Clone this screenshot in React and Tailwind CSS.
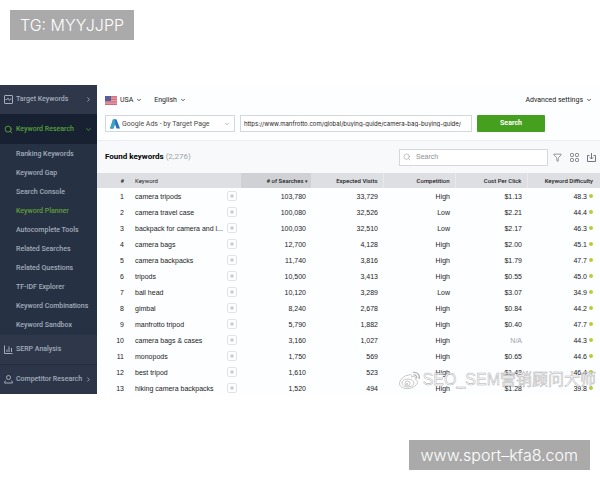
import React from 'react'
import { ChevronDown, ChevronRight, Search, Filter, Plus } from 'lucide-react'

const subItems = [
  'Ranking Keywords',
  'Keyword Gap',
  'Search Console',
  'Keyword Planner',
  'Autocomplete Tools',
  'Related Searches',
  'Related Questions',
  'TF-IDF Explorer',
  'Keyword Combinations',
  'Keyword Sandbox',
]

const rows = [
  ['camera tripods', '103,780', '33,729', 'High', '$1.13', '48.3'],
  ['camera travel case', '100,080', '32,526', 'Low', '$2.21', '44.4'],
  ['backpack for camera and l...', '100,030', '32,510', 'Low', '$2.17', '46.3'],
  ['camera bags', '12,700', '4,128', 'High', '$2.00', '45.1'],
  ['camera backpacks', '11,740', '3,816', 'High', '$1.79', '47.7'],
  ['tripods', '10,500', '3,413', 'High', '$0.55', '45.0'],
  ['ball head', '10,120', '3,289', 'Low', '$3.07', '34.9'],
  ['gimbal', '8,240', '2,678', 'High', '$0.84', '44.2'],
  ['manfrotto tripod', '5,790', '1,882', 'High', '$0.40', '47.7'],
  ['camera bags & cases', '3,160', '1,027', 'High', 'N/A', '44.3'],
  ['monopods', '1,750', '569', 'High', '$0.65', '44.6'],
  ['best tripod', '1,610', '523', 'High', '$1.42', '46.4'],
  ['hiking camera backpacks', '1,520', '494', 'High', '$1.28', '39.8'],
]

const TargetIcon = () => (
  <svg viewBox="0 0 18 18" className="w-[9px] h-[9px] shrink-0" fill="none" stroke="currentColor" strokeWidth="2">
    <rect x="1" y="1" width="16" height="16" rx="1" />
    <path d="M3 9h3l2-3 3 5 2-3h2" />
  </svg>
)

const BarsIcon = () => (
  <svg viewBox="0 0 18 18" className="w-[9px] h-[9px] shrink-0" fill="none" stroke="currentColor" strokeWidth="2">
    <path d="M1 1v16h16M6 14V9M10 14V3M15 14V6" />
  </svg>
)

const PersonIcon = () => (
  <svg viewBox="0 0 18 18" className="w-[9px] h-[9px] shrink-0" fill="none" stroke="currentColor" strokeWidth="2">
    <circle cx="9" cy="5" r="4" />
    <path d="M4 11c-2 1-3 3-3 5h16c0-2-1-4-3-5" />
  </svg>
)

const FlagIcon = () => (
  <svg viewBox="0 0 24 18" className="w-[12px] h-[9px] shrink-0">
    <rect width="24" height="18" fill="#e3a3ab" />
    <path d="M0 1.5h24M0 6.5h24M0 11.5h24M0 16.5h24" stroke="#d0687a" strokeWidth="2.5" />
    <rect width="12" height="10" fill="#565f9a" />
  </svg>
)

const AdsIcon = () => (
  <svg viewBox="0 0 20 20" className="w-[10px] h-[10px] shrink-0">
    <path d="M6 1h7l-6 18H0z" fill="#2f9e5b" />
    <path d="M7 1h6l7 18h-7z" fill="#2b6cc4" />
    <path d="M6 1h3l2 6-4 12H0z" fill="#37a4c8" />
  </svg>
)

const GridIcon = () => (
  <svg viewBox="0 0 18 18" className="w-[9px] h-[9px]" fill="none" stroke="currentColor" strokeWidth="1.8">
    <rect x="1" y="1" width="6" height="6" rx="2" />
    <rect x="11" y="1" width="6" height="6" rx="2" />
    <rect x="1" y="11" width="6" height="6" rx="2" />
    <rect x="11" y="11" width="6" height="6" rx="2" />
  </svg>
)

const ExportIcon = () => (
  <svg viewBox="0 0 18 18" className="w-[9px] h-[9px]" fill="none" stroke="currentColor" strokeWidth="1.8">
    <path d="M5 5H1v12h16V5h-4M9 0v12M5.500 8.500L9 12l3.500-3.500" />
  </svg>
)

const WeiboIcon = () => (
  <svg viewBox="0 0 44 38" className="w-[22px] h-[19px] shrink-0" fill="#ffffff" stroke="#b4b4b4" strokeWidth="1.5">
    <path d="M18 9c4-3 9-2 7 3 6-2 10 0 8 5 5 2 5 7 1 11-6 7-19 9-27 5-8-4-8-11 0-19 4-4 8-6 11-5z" />
    <ellipse cx="18" cy="24" rx="12" ry="8" />
    <circle cx="17" cy="25" r="5" />
    <circle cx="16" cy="26" r="1.500" />
    <path d="M28 3c8-2 15 5 12 13M29 8c4-1 8 3 6 7" fill="none" strokeWidth="2.500" />
  </svg>
)

const SideButton = ({ icon, label, className, arrow }) => (
  <button className={`flex items-center w-full pl-1 pr-[5px] gap-[3px] ${className}`}>
    {icon}
    <span className="flex-1 text-left whitespace-nowrap">{label}</span>
    {arrow}
  </button>
)

const Sidebar = () => (
  <nav className="w-[97px] shrink-0 bg-[#263144] text-[#a3adbb] font-['Roboto',sans-serif] font-medium text-[7px] leading-[9px]">
    <SideButton
      icon={<TargetIcon />}
      label="Target Keywords"
      className="h-[29px] bg-[#2f374a]"
      arrow={<ChevronRight size={7} strokeWidth={3} />}
    />
    <SideButton
      icon={<Search size={9} strokeWidth={2.5} className="shrink-0" />}
      label="Keyword Research"
      className="h-[30px] bg-[#172131] text-[#57a03c]"
      arrow={<ChevronDown size={7} strokeWidth={3} />}
    />
    <ul className="h-[191px] pt-px">
      {subItems.map((item) => (
        <li key={item} className="h-[19px] flex items-center pl-4">
          <a href="#" className={item === 'Keyword Planner' ? 'text-[#5f9f38]' : ''}>{item}</a>
        </li>
      ))}
    </ul>
    <SideButton
      icon={<BarsIcon />}
      label="SERP Analysis"
      className="h-[30px] bg-[#2f374a] border-b border-[#232c3d]"
    />
    <SideButton
      icon={<PersonIcon />}
      label="Competitor Research"
      className="h-[29px] bg-[#2d3648]"
      arrow={<ChevronRight size={7} strokeWidth={3} />}
    />
  </nav>
)

const Toolbar = () => (
  <div className="h-[56px] px-2 pt-[10px] border-b border-[#eceef0]">
    <div className="flex items-center h-[10px] font-['Roboto',sans-serif] text-[7px] leading-[10px]">
      <button className="flex items-center gap-[3px]">
        <FlagIcon />
        USA
        <ChevronDown size={6} strokeWidth={3} />
      </button>
      <button className="flex items-center gap-[3px] ml-3">
        English
        <ChevronDown size={6} strokeWidth={3} />
      </button>
      <button className="flex items-center gap-[3px] ml-auto">
        Advanced settings
        <ChevronDown size={6} strokeWidth={3} />
      </button>
    </div>
    <div className="flex gap-[5px] mt-[10px]">
      <div className="flex items-center w-[130px] h-[17px] px-1 gap-[2px] border border-[#d4d8dc] bg-white">
        <AdsIcon />
        <select aria-label="Source" className="appearance-none flex-1 min-w-0 font-['Roboto',sans-serif] text-[7px] leading-[10px] text-[#4a4a4a]">
          <option>Google Ads - by Target Page</option>
        </select>
        <ChevronDown size={6} className="text-gray-500 shrink-0" />
      </div>
      <input
        aria-label="Target page"
        className="flex-1 min-w-0 max-w-[232px] h-[17px] px-[3px] border border-[#d4d8dc] bg-white font-['Inter',sans-serif] text-[6px]"
        defaultValue="https://www.manfrotto.com/global/buying-guide/camera-bag-buying-guide/"
      />
      <button className="w-[68px] h-[17px] rounded-[1px] bg-[#46a01f] text-white font-['Roboto',sans-serif] font-bold text-[7px]">
        Search
      </button>
    </div>
  </div>
)

const ListHeader = () => (
  <div className="flex items-center h-[32px] pl-2 pr-1 bg-[#f8f9fb]">
    <h2 className="font-['Roboto',sans-serif] font-bold text-[8px] leading-[12px] text-black">
      Found keywords <span className="font-normal text-[#9da1a6]">(2,276)</span>
    </h2>
    <label className="flex items-center gap-[5px] ml-auto w-[149px] h-[17px] px-[3px] border border-[#d4d8dc] bg-white">
      <Search size={8} className="text-[#a5a9ad]" />
      <input aria-label="Search keywords" placeholder="Search" className="flex-1 min-w-0 text-[7px] placeholder:text-[#8b8f94]" />
    </label>
    <div className="flex items-center gap-2 ml-[5px] text-[#63686d]">
      <button aria-label="Filter"><Filter size={9} strokeWidth={1.8} /></button>
      <button aria-label="Columns"><GridIcon /></button>
      <button aria-label="Export"><ExportIcon /></button>
    </div>
  </div>
)

const headCell = 'h-[15px] p-0 pr-[5px] border-r border-[#e8e9eb] font-medium text-right'

const KeywordTable = () => (
  <table className="w-full table-fixed text-[7px] leading-[9px] text-right whitespace-nowrap">
    <colgroup>
      <col className="w-[38px]" />
      <col className="w-[106px]" />
      <col className="w-[70px]" />
      <col className="w-[72px]" />
      <col className="w-[72px]" />
      <col className="w-[72px]" />
      <col />
    </colgroup>
    <thead className="bg-[#dddfe2] font-['Roboto',sans-serif] text-[6px]">
      <tr>
        <th className="p-0 pr-[11px] font-medium">#</th>
        <th className="p-0 font-normal text-left">Keyword</th>
        <th className="h-[15px] p-0 pr-[3px] font-medium bg-[#cfd1d5]"># of Searches <span className="text-[5px]">▾</span></th>
        <th className={headCell}>Expected Visits</th>
        <th className={headCell}>Competition</th>
        <th className={headCell}>Cost Per Click</th>
        <th className="p-0 pr-[7px] font-medium">Keyword Difficulty</th>
      </tr>
    </thead>
    <tbody>
      {rows.map(([keyword, searches, visits, competition, cpc, difficulty], i) => (
        <tr key={keyword} className="h-[16px]">
          <td className="p-0 pr-[11px]">{i + 1}</td>
          <td className="p-0 pr-1">
            <div className="flex items-center justify-between">
              {keyword}
              <button aria-label={`Add ${keyword}`} className="flex items-center justify-center w-[10px] h-[10px] rounded-[2px] border border-[#e2e3e5] text-[#85898d]">
                <Plus size={6} />
              </button>
            </div>
          </td>
          <td className="p-0 pr-[5px]">{searches}</td>
          <td className="p-0 pr-[5px]">{visits}</td>
          <td className="p-0 pr-[5px]">{competition}</td>
          <td className={cpc === 'N/A' ? 'p-0 pr-[5px] text-gray-400' : 'p-0 pr-[5px]'}>{cpc}</td>
          <td className="p-0 pr-[7px]">
            <div className="flex items-center justify-end gap-[2px]">
              {difficulty}
              <span className="w-[4px] h-[4px] rounded-full bg-[#bccb35]"></span>
            </div>
          </td>
        </tr>
      ))}
    </tbody>
  </table>
)

const App = () => {
  return (
    <div className="bg-white text-[#222222] font-['Liberation_Sans',sans-serif]">
      <div className="p-[10px] pb-[45px]">
        <div className="w-fit h-[30px] px-[10px] bg-[#aaaaaa] text-white font-['Inter',sans-serif] font-light text-[16px] leading-[30px]">
          TG: MYYJJPP
        </div>
      </div>

      <div className="relative flex h-[309px] overflow-hidden">
        <Sidebar />
        <main className="flex-1 min-w-0 bg-[#fdfeff]">
          <Toolbar />
          <ListHeader />
          <KeywordTable />
        </main>
        <div className="absolute right-1 bottom-1 flex items-center gap-[2px] text-[16px] leading-[20px] text-white/80 font-['Liberation_Sans','Noto_Sans_CJK_SC',sans-serif] [-webkit-text-stroke:0.5px_#b0b0b0]">
          <WeiboIcon />
          SEO_SEM营销顾问大师
        </div>
      </div>

      <div className="flex justify-end px-[10px] pt-[46px] pb-[10px]">
        <div className="h-[30px] px-3 bg-[#aaaaaa] text-white font-['Inter',sans-serif] font-light text-[16px] leading-[30px]">
          www.sport–kfa8.com
        </div>
      </div>
    </div>
  )
}

export default App
